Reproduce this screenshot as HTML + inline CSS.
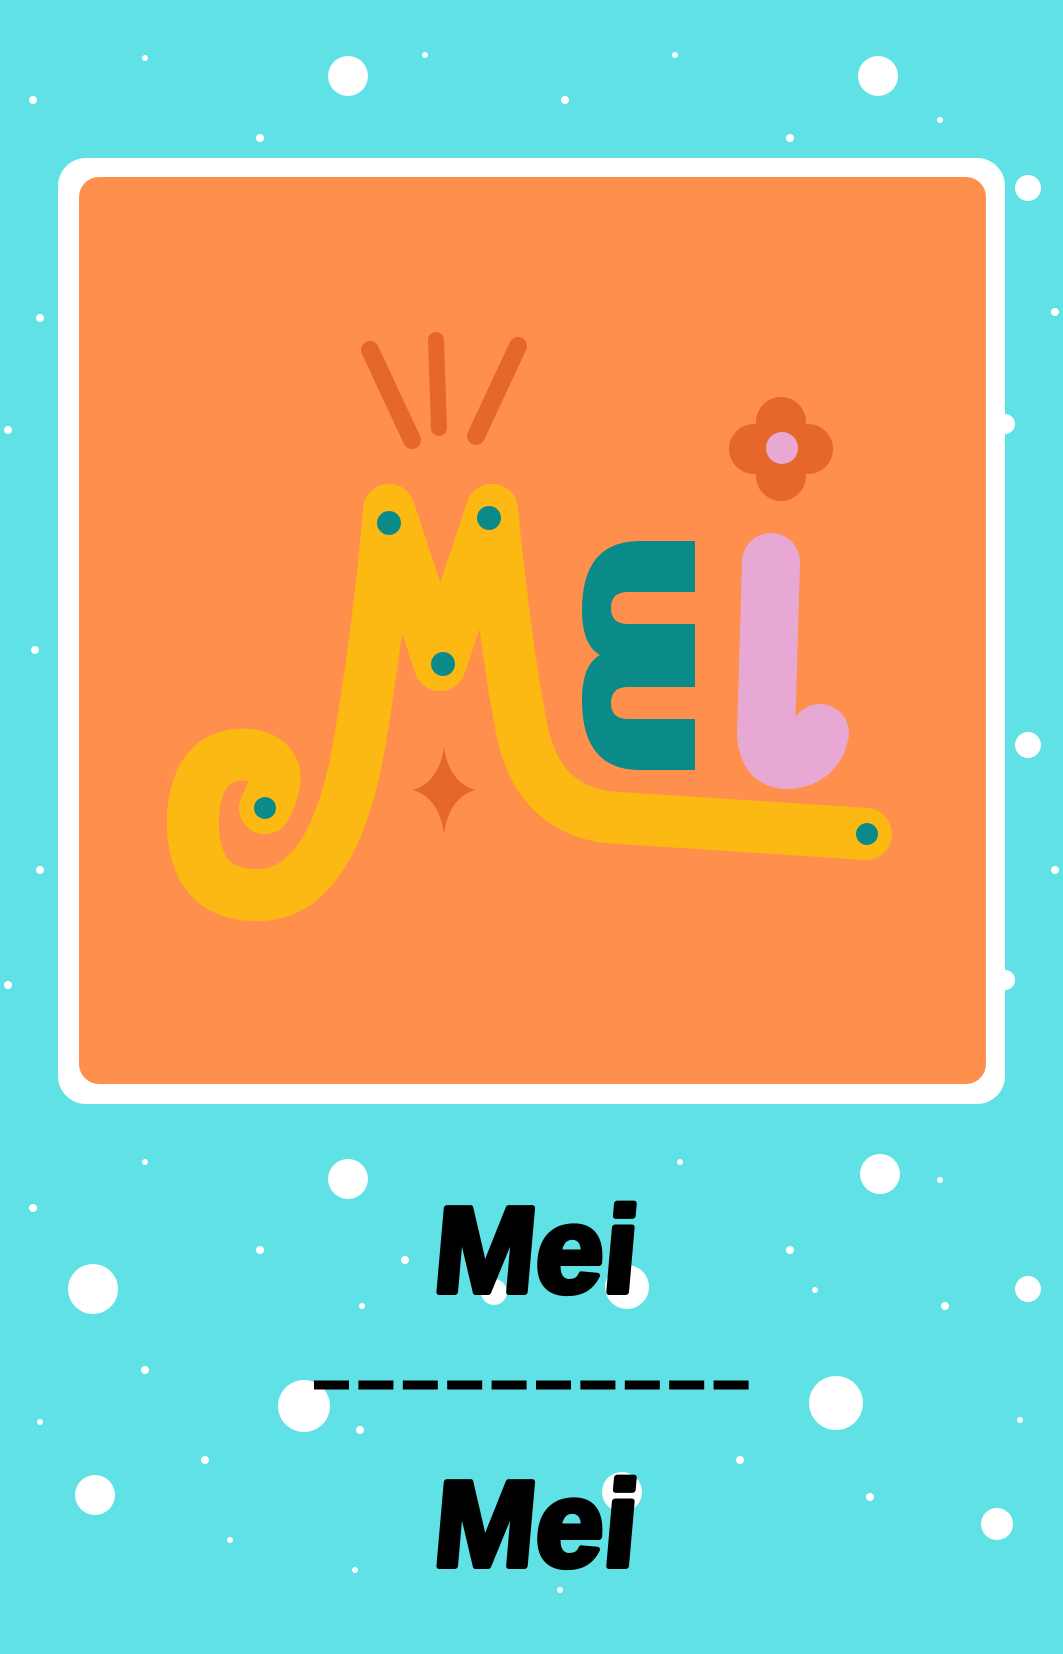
<!DOCTYPE html>
<html><head><meta charset="utf-8"><style>
html,body{margin:0;padding:0;width:1063px;height:1654px;overflow:hidden;background:#5fe1e6}
svg{display:block}
</style></head><body>
<svg width="1063" height="1654" viewBox="0 0 1063 1654" xmlns="http://www.w3.org/2000/svg">
<rect width="1063" height="1654" fill="#5fe1e6"/>
<g fill="#fff">
<circle cx="348" cy="76" r="20"/><circle cx="878" cy="76" r="20"/><circle cx="1028" cy="188" r="13"/>
<circle cx="348" cy="1179" r="20"/><circle cx="880" cy="1174" r="20"/><circle cx="93" cy="1289" r="25"/>
<circle cx="627" cy="1287" r="22"/><circle cx="494" cy="1292" r="13"/><circle cx="1028" cy="1289" r="13"/>
<circle cx="304" cy="1406" r="26"/><circle cx="836" cy="1403" r="27"/><circle cx="95" cy="1495" r="20"/>
<circle cx="622" cy="1492" r="20"/><circle cx="997" cy="1524" r="16"/><circle cx="1028" cy="745" r="13"/>
<circle cx="1005" cy="424" r="10"/><circle cx="1005" cy="980" r="10"/>
<circle cx="33" cy="100" r="4"/><circle cx="145" cy="58" r="3"/><circle cx="260" cy="138" r="4"/><circle cx="425" cy="55" r="3"/>
<circle cx="565" cy="100" r="4"/><circle cx="675" cy="55" r="3"/><circle cx="790" cy="138" r="4"/><circle cx="940" cy="120" r="3"/>
<circle cx="40" cy="318" r="4"/><circle cx="8" cy="430" r="4"/><circle cx="35" cy="650" r="4"/><circle cx="40" cy="870" r="4"/>
<circle cx="8" cy="985" r="4"/><circle cx="1055" cy="312" r="4"/><circle cx="1055" cy="870" r="4"/>
<circle cx="145" cy="1162" r="3"/><circle cx="33" cy="1208" r="4"/><circle cx="260" cy="1250" r="4"/><circle cx="405" cy="1260" r="4"/>
<circle cx="362" cy="1306" r="3"/><circle cx="680" cy="1162" r="3"/><circle cx="790" cy="1250" r="4"/><circle cx="940" cy="1180" r="3"/>
<circle cx="815" cy="1290" r="3"/><circle cx="945" cy="1306" r="4"/><circle cx="145" cy="1370" r="4"/><circle cx="40" cy="1422" r="3"/>
<circle cx="205" cy="1460" r="4"/><circle cx="360" cy="1430" r="4"/><circle cx="740" cy="1460" r="4"/><circle cx="870" cy="1497" r="4"/>
<circle cx="230" cy="1540" r="3"/><circle cx="355" cy="1570" r="3"/><circle cx="560" cy="1590" r="3"/><circle cx="1020" cy="1420" r="3"/>
</g>
<rect x="58" y="158" width="947" height="946" rx="28" fill="#fff"/>
<rect x="79" y="177" width="907" height="907" rx="20" fill="#fe8f4d"/>
<g stroke="#e5672a" stroke-linecap="round" fill="none">
<path d="M370 350 L412 440" stroke-width="18"/>
<path d="M436 340 L439 428" stroke-width="16"/>
<path d="M518 346 L476 436" stroke-width="18"/>
</g>
<g fill="#e5672a">
<circle cx="781" cy="422" r="25"/><circle cx="781" cy="476" r="25"/><circle cx="754" cy="449" r="25"/><circle cx="808" cy="449" r="25"/>
<circle cx="781" cy="449" r="22"/>
<path d="M444 747 Q449 782 475 790 Q449 798 444 834 Q439 798 413 790 Q439 782 444 747Z"/>
</g>
<circle cx="782" cy="448" r="16" fill="#e7a9d3"/>
<path d="M640 541 H695 V770 H640 Q582 770 582 700 Q582 665 600 655 Q582 645 582 610 Q582 541 640 541Z" fill="#0a8a88"/>
<path d="M695 592 H628 Q611 592 611 608 Q611 624 628 624 H695Z M695 687 H628 Q611 687 611 703 Q611 719 628 719 H695Z" fill="#fe8f4d"/>
<g stroke="#e7a9d3" stroke-linecap="round" fill="none">
<path d="M771 562 L766 735 Q768 762 790 760 Q815 757 820 733" stroke-width="58"/>
</g>
<g stroke="#fdb913" stroke-linecap="round" stroke-linejoin="round" fill="none" stroke-width="52">
<path d="M389 510 L440 665 L492 510"/>
<path d="M492 510 Q505 640 520 720 Q535 815 620 818 L866 834"/>
<path d="M389 510 Q380 620 360 740 Q335 890 262 895 Q190 898 193 815 Q198 750 250 755 Q290 762 265 808"/>
</g>
<g fill="#0a8a88">
<circle cx="389" cy="523" r="12"/><circle cx="489" cy="518" r="12"/><circle cx="443" cy="664" r="12"/>
<circle cx="265" cy="808" r="11"/><circle cx="867" cy="834" r="11"/>
</g>
<g font-family="Liberation Sans, sans-serif" font-weight="bold" font-size="122" fill="#000" stroke="#000" stroke-width="6" stroke-linejoin="round" text-anchor="middle">
<text x="646" y="1292" transform="skewX(-5)">Mei</text>
<text x="670" y="1566" transform="skewX(-5)">Mei</text>
</g>
<line x1="314" y1="1385" x2="749" y2="1385" stroke="#000" stroke-width="9" stroke-dasharray="35 9.4"/>
</svg>
</body></html>
